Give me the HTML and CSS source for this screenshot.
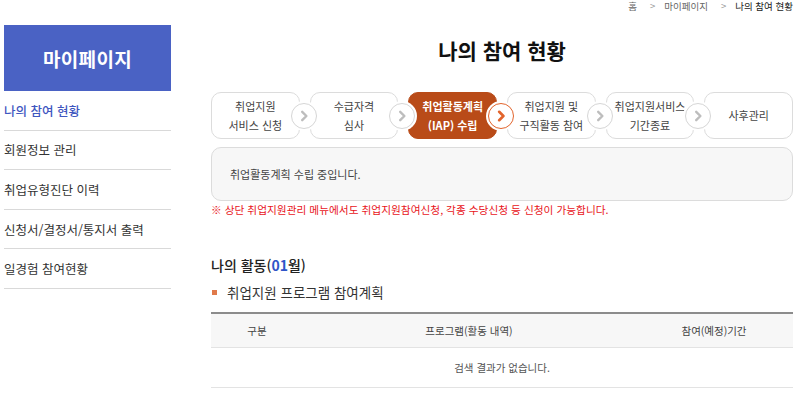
FILE: index.html
```html
<!DOCTYPE html>
<html lang="ko">
<head>
<meta charset="utf-8">
<title>나의 참여 현황</title>
<link rel="stylesheet" href="styles.css">
</head>
<body>
<div class="page">
  <nav class="breadcrumb">
    <span>홈</span><span class="sep">&gt;</span><span>마이페이지</span><span class="sep">&gt;</span><span class="current">나의 참여 현황</span>
  </nav>
  <div class="layout">
    <aside class="sidebar">
      <div class="side-title">마이페이지</div>
      <ul class="side-menu">
        <li class="active">나의 참여 현황</li>
        <li>회원정보 관리</li>
        <li>취업유형진단 이력</li>
        <li>신청서/결정서/통지서 출력</li>
        <li>일경험 참여현황</li>
      </ul>
    </aside>
    <main class="main">
      <h1 class="title">나의 참여 현황</h1>
      <ol class="steps">
        <li class="step"><span>취업지원<br>서비스 신청</span><i class="arrow"><svg viewBox="0 0 10 10"><polyline points="3.5,1.5 7,5 3.5,8.5"/></svg></i></li>
        <li class="step"><span>수급자격<br>심사</span><i class="arrow"><svg viewBox="0 0 10 10"><polyline points="3.5,1.5 7,5 3.5,8.5"/></svg></i></li>
        <li class="step on"><span>취업활동계획<br>(IAP) 수립</span><i class="arrow"><svg viewBox="0 0 10 10"><polyline points="3.5,1.5 7,5 3.5,8.5"/></svg></i></li>
        <li class="step"><span>취업지원 및<br>구직활동 참여</span><i class="arrow"><svg viewBox="0 0 10 10"><polyline points="3.5,1.5 7,5 3.5,8.5"/></svg></i></li>
        <li class="step"><span>취업지원서비스<br>기간종료</span><i class="arrow"><svg viewBox="0 0 10 10"><polyline points="3.5,1.5 7,5 3.5,8.5"/></svg></i></li>
        <li class="step"><span>사후관리</span></li>
      </ol>
      <div class="status">취업활동계획 수립 중입니다.</div>
      <p class="notice">※ 상단 취업지원관리 메뉴에서도 취업지원참여신청, 각종 수당신청 등 신청이 가능합니다.</p>
      <h2 class="sec-title">나의 활동(<em>01</em>월)</h2>
      <h3 class="sub-title">취업지원 프로그램 참여계획</h3>
      <table class="tbl">
        <thead>
          <tr><th class="c1">구분</th><th class="c2">프로그램(활동 내역)</th><th class="c3">참여(예정)기간</th></tr>
        </thead>
        <tbody>
          <tr><td colspan="3">검색 결과가 없습니다.</td></tr>
        </tbody>
      </table>
    </main>
  </div>
</div>
</body>
</html>
```
FILE: styles.css
```css
* { box-sizing: border-box; }
html, body { margin: 0; padding: 0; background: #fff; }
body {
  font-family: "Noto Sans CJK KR", "Noto Sans", sans-serif;
  color: #333;
  overflow: hidden;
}
.page { width: 800px; }
.breadcrumb {
  height: 25px;
  display: flex;
  justify-content: flex-end;
  align-items: flex-start;
  padding-right: 7px;
  padding-top: 0;
  font-size: 9.5px;
  line-height: 12px;
  color: #666;
}
.breadcrumb .sep { margin: 0 9px 0 13px; color: #999; }
.breadcrumb .current { color: #222; }
.layout {
  display: flex;
  gap: 40px;
  padding-left: 4px;
}
.sidebar { width: 167px; flex: none; }
.side-title {
  height: 66px;
  background: #4a62c4;
  color: #fff;
  font-size: 19px;
  font-weight: 700;
  display: flex;
  align-items: center;
  justify-content: center;
  letter-spacing: 0.3px;
}
.side-menu { list-style: none; margin: 0; padding: 0; }
.side-menu li {
  height: 39.6px;
  border-bottom: 1px solid #d9d9d9;
  display: flex;
  align-items: center;
  font-size: 12.5px;
  color: #333;
}
.side-menu li.active { color: #3f57bf; font-weight: 500; }
.main { width: 582px; flex: none; padding-top: 10px; }
.title {
  margin: 0;
  text-align: center;
  font-size: 21px;
  line-height: 30px;
  font-weight: 700;
  color: #111;
}
.steps {
  list-style: none;
  margin: 27px 0 0;
  padding: 0;
  display: grid;
  grid-template-columns: repeat(6, 1fr);
  gap: 10px;
}
.step {
  position: relative;
  height: 47px;
  border: 1px solid #dcdcdc;
  border-radius: 10px;
  display: flex;
  align-items: center;
  justify-content: center;
  text-align: center;
  font-size: 11px;
  line-height: 19px;
  color: #444;
}
.step.on {
  background: #b94b18;
  border-color: #b94b18;
  color: #fff;
  font-weight: 700;
}
.arrow {
  position: absolute;
  right: -18px;
  top: 50%;
  margin-top: -13px;
  width: 26px;
  height: 26px;
  border-radius: 50%;
  background: #fff;
  border: 1px solid #d6d6d6;
  box-shadow: 0 0 0 2px #fff;
  z-index: 2;
  display: flex;
  align-items: center;
  justify-content: center;
}
.arrow svg { width: 12px; height: 12px; }
.arrow polyline { fill: none; stroke: #bdbdbd; stroke-width: 2; stroke-linecap: round; stroke-linejoin: round; }
.step.on .arrow { border: 1.5px solid #e2642c; }
.step.on .arrow polyline { stroke: #e2642c; stroke-width: 2.2; }
.status {
  margin-top: 8px;
  height: 54px;
  border: 1px solid #dcdcdc;
  border-radius: 10px;
  background: #f7f7f7;
  padding-left: 18px;
  display: flex;
  align-items: center;
  font-size: 11px;
  color: #444;
}
.notice {
  margin: 2px 0 0;
  font-size: 10.7px;
  line-height: 14px;
  color: #e8141a;
}
.sec-title {
  margin: 38px 0 0;
  font-size: 14px;
  line-height: 20px;
  font-weight: 500;
  color: #222;
}
.sec-title em { font-style: normal; color: #2f55c8; font-weight: 700; }
.sub-title {
  margin: 7px 0 0;
  font-size: 13.5px;
  line-height: 20px;
  font-weight: 400;
  color: #333;
  display: flex;
  align-items: center;
}
.sub-title::before {
  content: "";
  width: 5px;
  height: 5px;
  background: #e07a4a;
  margin: 0 10px 0 1px;
}
.tbl {
  margin-top: 10px;
  width: 100%;
  border-collapse: collapse;
  border-top: 2px solid #8c8c8c;
  font-size: 10.5px;
}
.tbl th {
  height: 34px;
  background: #f7f7f7;
  border-bottom: 1px solid #e3e3e3;
  font-weight: 400;
  color: #444;
  padding: 0;
}
.tbl th.c1 { width: 92px; }
.tbl th.c3 { width: 158px; }
.tbl td {
  height: 40px;
  text-align: center;
  border-bottom: 1px solid #e3e3e3;
  color: #555;
  padding: 0;
}
```
